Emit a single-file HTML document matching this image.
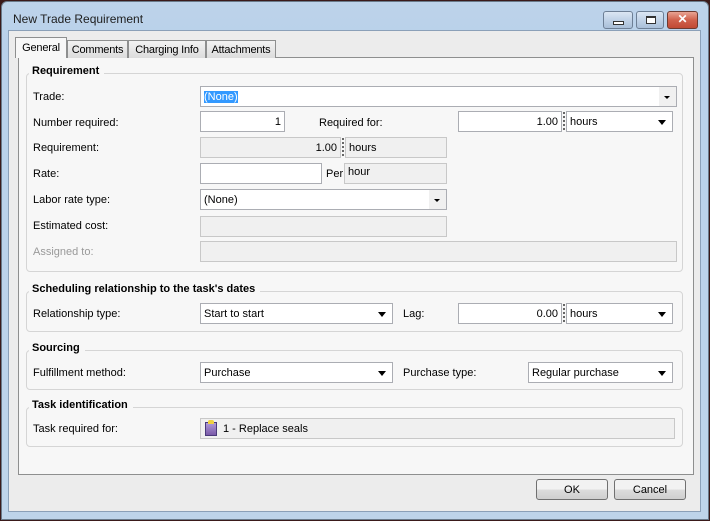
<!DOCTYPE html>
<html><head><style>
*{box-sizing:border-box;margin:0;padding:0}
body{width:710px;height:521px;overflow:hidden;background:#3a1a1a;font-family:"Liberation Sans",sans-serif;font-size:11px;color:#000;position:relative;white-space:nowrap}
.a{position:absolute}
.win{left:1px;top:1px;width:708px;height:519px;background:linear-gradient(#bdd3ea,#b9d1ea 40px,#bed4ea);border:1px solid #6a7a8a;border-radius:6px 6px 0 0}
.client{left:8px;top:30px;width:693px;height:482px;background:#ececec;border:1px solid #8ba0b8}
.panel{left:18px;top:57px;width:676px;height:418px;background:#f7f7f7;border:1px solid #8e8f8f}
.tab{top:40px;height:18px;border:1px solid #8e8f8f;border-bottom:none;background:linear-gradient(#f2f2f2,#dcdcdc);padding:3px 0 0 0;font-size:11px;text-align:center;letter-spacing:-0.2px}
.tab.sel{top:37px;height:21px;background:#f7f7f7;padding-top:4px;z-index:2}
.grp{border:1px solid #d5d5d5;border-radius:4px}
.gt{font-weight:bold;background:#f7f7f7;padding:0 5px 0 3px;font-size:11px}
.lbl{font-size:11px}
.in{background:#fff;border:1px solid #abadb3;height:21px;padding:4px 3px 0}
.dis{background:#f0f0f0;border:1px solid #c8c8c8;height:21px;padding:4px 3px 0}
.r{text-align:right}
.dd::after{content:"";position:absolute;right:6px;top:8px;border-left:4px solid transparent;border-right:4px solid transparent;border-top:5px solid #000}
.ddg::before{content:"";position:absolute;right:0;top:0;width:17px;height:19px;background:#f0f0f0}
.ddg::after{content:"";position:absolute;right:6px;top:9px;border-left:3px solid transparent;border-right:3px solid transparent;border-top:3px solid #000}
.dots{width:2px;height:20px;background:repeating-linear-gradient(#666 0 2px,transparent 2px 4px)}
.btn{border:1px solid #707070;border-radius:3px;background:linear-gradient(#f2f2f2 50%,#dddddd 50%,#cfcfcf);text-align:center;padding-top:4px;height:21px;font-size:11px}
.wb{top:11px;height:18px;border:1px solid #6d7f95;border-radius:3px;background:linear-gradient(#dbe6f3,#c0d2e7 50%,#a9bfd8)}
</style></head><body>
<div class="a win"></div>
<div class="a" style="left:13px;top:12px;font-size:12px;color:#1e1e1e">New Trade Requirement</div>
<div class="a wb" style="left:603px;width:30px"><div class="a" style="left:9px;top:9px;width:11px;height:4px;border:1px solid #333;background:#fff"></div></div>
<div class="a wb" style="left:636px;width:28px"><div class="a" style="left:9px;top:4px;width:10px;height:8px;border:1px solid #333;border-top-width:2px;background:#fff"></div></div>
<div class="a wb" style="left:667px;width:31px;background:linear-gradient(#e8a493,#d0614c 50%,#c14a34);border-color:#6e3a30;color:#fff;font-weight:bold;text-align:center;font-size:12px;line-height:15px">✕</div>
<div class="a client"></div>
<div class="a panel"></div>
<div class="a tab sel" style="left:15px;width:52px">General</div>
<div class="a tab" style="left:67px;width:61px">Comments</div>
<div class="a tab" style="left:128px;width:78px">Charging Info</div>
<div class="a tab" style="left:206px;width:70px">Attachments</div>

<div class="a grp" style="left:26px;top:73px;width:657px;height:199px"></div>
<div class="a gt" style="left:29px;top:65px">Requirement</div>
<div class="a lbl" style="left:33px;top:91px">Trade:</div>
<div class="a in ddg" style="left:200px;top:86px;width:477px"><span style="background:#3399ff;color:#fff">(None)</span></div>
<div class="a lbl" style="left:33px;top:117px">Number required:</div>
<div class="a in r" style="left:200px;top:111px;width:85px">1</div>
<div class="a lbl" style="left:319px;top:117px">Required for:</div>
<div class="a in r" style="left:458px;top:111px;width:104px">1.00</div>
<div class="a dots" style="left:563px;top:112px"></div>
<div class="a in dd" style="left:566px;top:111px;width:107px">hours</div>
<div class="a lbl" style="left:33px;top:142px">Requirement:</div>
<div class="a dis r" style="left:200px;top:137px;width:141px">1.00</div>
<div class="a dots" style="left:342px;top:138px"></div>
<div class="a dis" style="left:345px;top:137px;width:102px">hours</div>
<div class="a lbl" style="left:33px;top:168px">Rate:</div>
<div class="a in" style="left:200px;top:163px;width:122px"></div>
<div class="a lbl" style="left:326px;top:168px">Per</div>
<div class="a dis" style="left:344px;top:163px;width:103px;padding-top:2px">hour</div>
<div class="a lbl" style="left:33px;top:194px">Labor rate type:</div>
<div class="a in ddg" style="left:200px;top:189px;width:247px">(None)</div>
<div class="a lbl" style="left:33px;top:220px">Estimated cost:</div>
<div class="a dis" style="left:200px;top:216px;width:247px"></div>
<div class="a lbl" style="left:33px;top:246px;color:#999">Assigned to:</div>
<div class="a dis" style="left:200px;top:241px;width:477px"></div>

<div class="a grp" style="left:26px;top:291px;width:657px;height:41px"></div>
<div class="a gt" style="left:29px;top:283px">Scheduling relationship to the task's dates</div>
<div class="a lbl" style="left:33px;top:308px">Relationship type:</div>
<div class="a in dd" style="left:200px;top:303px;width:193px">Start to start</div>
<div class="a lbl" style="left:403px;top:308px">Lag:</div>
<div class="a in r" style="left:458px;top:303px;width:104px">0.00</div>
<div class="a dots" style="left:563px;top:304px"></div>
<div class="a in dd" style="left:566px;top:303px;width:107px">hours</div>

<div class="a grp" style="left:26px;top:350px;width:657px;height:40px"></div>
<div class="a gt" style="left:29px;top:342px">Sourcing</div>
<div class="a lbl" style="left:33px;top:367px">Fulfillment method:</div>
<div class="a in dd" style="left:200px;top:362px;width:193px">Purchase</div>
<div class="a lbl" style="left:403px;top:367px">Purchase type:</div>
<div class="a in dd" style="left:528px;top:362px;width:145px">Regular purchase</div>

<div class="a grp" style="left:26px;top:407px;width:657px;height:40px"></div>
<div class="a gt" style="left:29px;top:399px">Task identification</div>
<div class="a lbl" style="left:33px;top:423px">Task required for:</div>
<div class="a dis" style="left:200px;top:418px;width:475px;padding-left:22px">1 - Replace seals</div>
<div class="a" style="left:205px;top:422px;width:12px;height:14px;background:linear-gradient(#b09ad8,#7a5aa8);border:1px solid #4a3a7a"></div>
<div class="a" style="left:208px;top:420px;width:6px;height:4px;background:#f0d040;border-radius:2px 2px 0 0"></div>

<div class="a btn" style="left:536px;top:479px;width:72px">OK</div>
<div class="a btn" style="left:614px;top:479px;width:72px">Cancel</div>
</body></html>
